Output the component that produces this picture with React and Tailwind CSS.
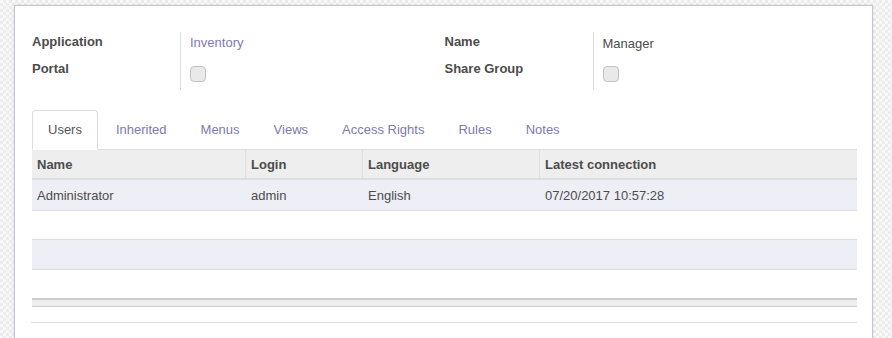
import React from "react";

const font = "font-['Liberation_Sans',Arial,sans-serif]";

function Checkbox() {
  return (
    <div className="w-[16px] h-[16px] rounded-[4px] border border-[#c2c2c2] bg-[#e9e9e9]" />
  );
}

function Tab({ label, active }) {
  return (
    <div
      className={
        "px-[15px] py-[10px] leading-[18px] mr-[2px] -mb-px rounded-t-[4px] border " +
        (active
          ? "border-[#dddddd] border-b-white bg-white text-[#555555]"
          : "border-transparent text-[#7c7bad]")
      }
    >
      {label}
    </div>
  );
}

const cols = "grid grid-cols-[213px_117px_177px_1fr]";

export default function App() {
  const rows = [
    { bg: "bg-[#eeeef7]", h: "h-[31px]", cells: ["Administrator", "admin", "English", "07/20/2017 10:57:28"] },
    { bg: "bg-white", h: "h-[29px]", cells: ["", "", "", ""] },
    { bg: "bg-[#eeeef7]", h: "h-[30px]", cells: ["", "", "", ""] },
    { bg: "bg-white", h: "h-[28px]", cells: ["", "", "", ""], last: true },
  ];
  return (
    <div
      className={
        "h-[338px] w-[892px] overflow-hidden pt-[5px] text-[13px] text-[#4c4c4c] bg-[image:repeating-conic-gradient(#ececec_0%_25%,#f8f8f8_0%_50%)] bg-[length:6px_6px] " +
        font
      }
    >
      <div className="ml-[14px] w-[859px] h-[400px] bg-white border border-[#c6c6d2] shadow-[0_0_2px_rgba(0,0,0,0.12)] pt-[26px] pl-[17px] pr-[15px]">
        {/* Top group */}
        <div className="grid grid-cols-2">
          <div className="grid grid-cols-[148px_1fr] grid-rows-[26px_32px]">
            <div className="font-bold leading-[18px] pt-[1px]">Application</div>
            <div className="border-l border-[#dddddd] pl-[9px] pt-[2px] leading-[18px] text-[#7c7bad]">Inventory</div>
            <div className="font-bold leading-[18px] pt-[2px]">Portal</div>
            <div className="border-l border-[#dddddd] pl-[9px] pt-[8px]">
              <Checkbox />
            </div>
          </div>
          <div className="grid grid-cols-[148px_1fr] grid-rows-[26px_32px]">
            <div className="font-bold leading-[18px] pt-[1px]">Name</div>
            <div className="border-l border-[#dddddd] pl-[9px] pt-[3px] leading-[18px]">Manager</div>
            <div className="font-bold leading-[18px] pt-[2px]">Share Group</div>
            <div className="border-l border-[#dddddd] pl-[9px] pt-[8px]">
              <Checkbox />
            </div>
          </div>
        </div>

        {/* Tabs */}
        <div className="mt-[20px] flex border-b border-[#dddddd]">
          <Tab label="Users" active />
          <Tab label="Inherited" />
          <Tab label="Menus" />
          <Tab label="Views" />
          <Tab label="Access Rights" />
          <Tab label="Rules" />
          <Tab label="Notes" />
        </div>

        {/* Table */}
        <div>
          <div className={cols + " h-[30px] bg-[#eeeeee] border-b-2 border-[#dddddd] font-bold leading-[18px]"}>
            <div className="pl-[5px] pt-[6px]">Name</div>
            <div className="border-l border-[#dedede] pl-[5px] pt-[6px]">Login</div>
            <div className="border-l border-[#dedede] pl-[5px] pt-[6px]">Language</div>
            <div className="border-l border-[#dedede] pl-[5px] pt-[6px]">Latest connection</div>
          </div>
          {rows.map((r, i) => (
            <div
              key={i}
              className={
                cols + " " + r.h + " " + r.bg + " leading-[18px] " + (r.last ? "" : "border-b border-[#dddddd]")
              }
            >
              {r.cells.map((c, j) => (
                <div
                  key={j}
                  className={(j > 0 ? "border-l border-transparent " : "") + "pl-[5px] pt-[7px]"}
                >
                  {c}
                </div>
              ))}
            </div>
          ))}
          <div className="h-[9px] bg-[#eeeeee] border-t-2 border-b border-[#cccccc]" />
          <div className="mt-[15px] -ml-px border-t border-[#dddddd]" />
        </div>
      </div>
    </div>
  );
}
